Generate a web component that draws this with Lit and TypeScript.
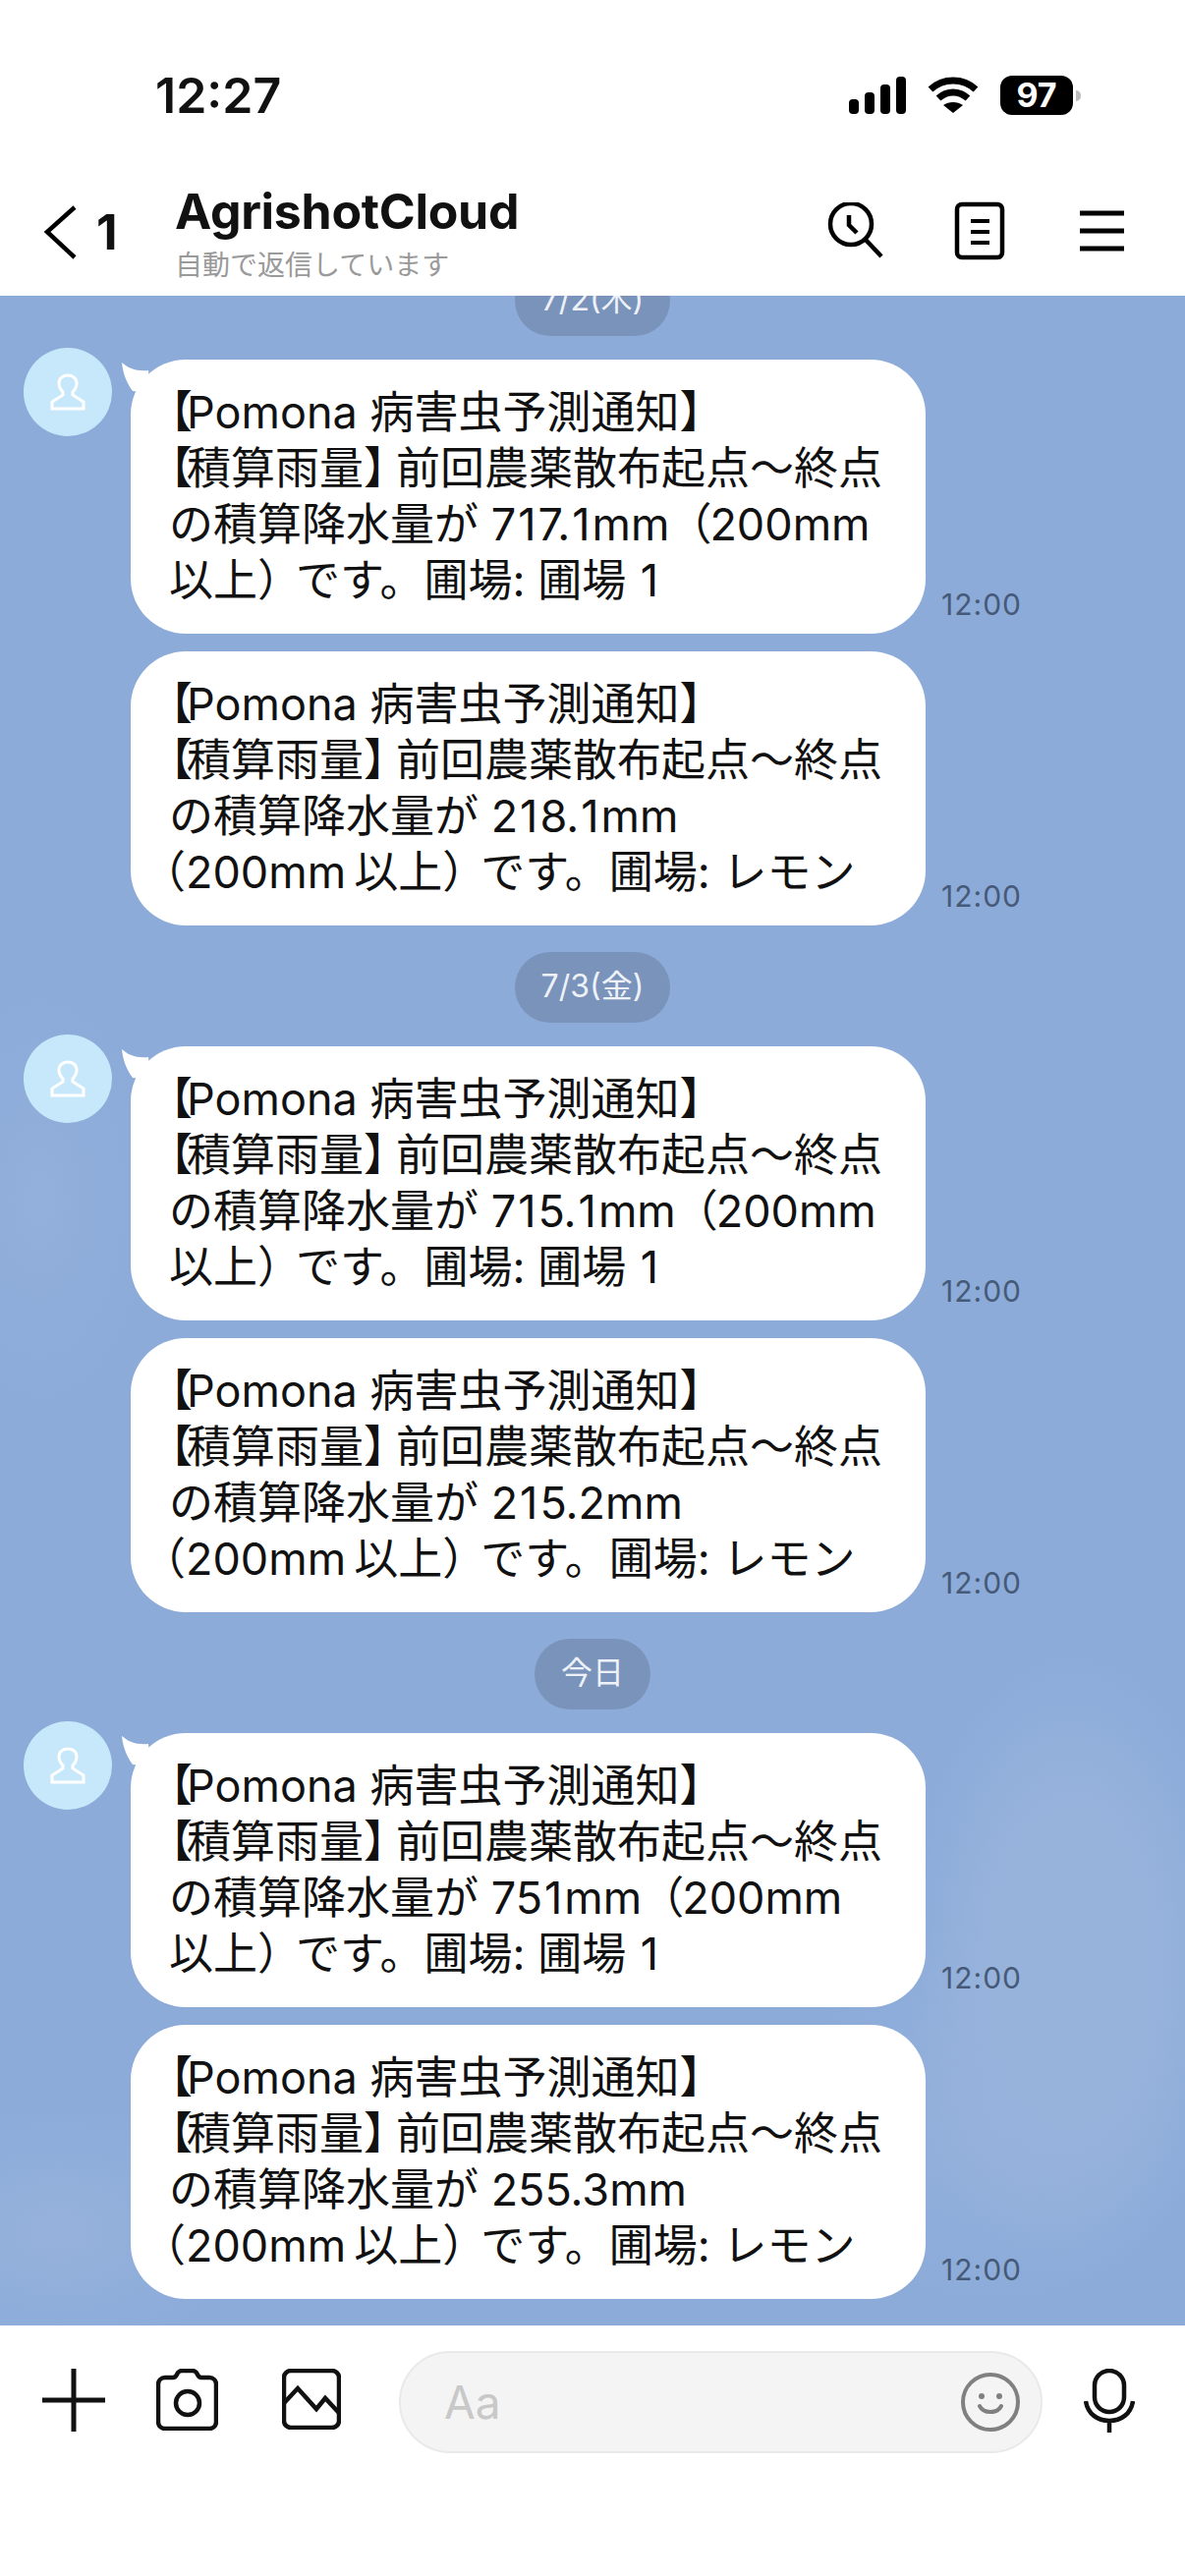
import { html, css, LitElement } from 'lit'
import { customElement } from 'lit/decorators.js'

// one day of notifications; every bubble keeps the line breaks of the app
const days = [
  {
    label: '7/2(木)',
    first: true,
    messages: [
      ['【Pomona 病害虫予測通知】', '【積算雨量】前回農薬散布起点～終点', 'の積算降水量が 717.1mm（200mm', '以上）です。圃場: 圃場 1'],
      ['【Pomona 病害虫予測通知】', '【積算雨量】前回農薬散布起点～終点', 'の積算降水量が 218.1mm', '（200mm\u2009以上）です。圃場: レモン']
    ]
  },
  {
    label: '7/3(金)',
    messages: [
      ['【Pomona 病害虫予測通知】', '【積算雨量】前回農薬散布起点～終点', 'の積算降水量が 715.1mm（200mm', '以上）です。圃場: 圃場 1'],
      ['【Pomona 病害虫予測通知】', '【積算雨量】前回農薬散布起点～終点', 'の積算降水量が 215.2mm', '（200mm\u2009以上）です。圃場: レモン']
    ]
  },
  {
    label: '今日',
    messages: [
      ['【Pomona 病害虫予測通知】', '【積算雨量】前回農薬散布起点～終点', 'の積算降水量が 751mm（200mm', '以上）です。圃場: 圃場 1'],
      ['【Pomona 病害虫予測通知】', '【積算雨量】前回農薬散布起点～終点', 'の積算降水量が 255.3mm', '（200mm\u2009以上）です。圃場: レモン']
    ]
  }
]

// the app trims the empty half of brackets and sets a wider 1 than Inter, so those get their own span
const renderLine = (line: string) =>
  line.split(/([【】（）1])/).map((part, i) => {
    if (part === '【') return html`<span class="open-lens">【</span>`
    if (part === '】') return html`<span class="close-lens">】</span>`
    if (part === '（') return html`<span class=${i === 1 ? 'open-paren' : 'mid-paren'}>（</span>`
    if (part === '）') return html`<span class="close-paren">）</span>`
    if (part === '1') return html`<span class="one">1</span>`
    return part
  })

@customElement('app-root')
export class AppRoot extends LitElement {
  static styles = css`
    :host {
      display: block;
      width: 1206px;
      height: 2622px;
      background: #fff;
      overflow: hidden;
      font-family: Inter, 'Noto Sans CJK JP', sans-serif;
      color: #111;
    }
    svg {
      display: block;
      flex: none;
    }
    .status {
      height: 160px;
      display: flex;
      align-items: flex-start;
      padding: 77px 0 0 158px;
      box-sizing: border-box;
    }
    .clock {
      font-size: 50px;
      line-height: 40px;
      font-weight: 600;
    }
    .status-icons {
      margin-left: auto;
      margin-right: 114px;
      display: flex;
      align-items: center;
      gap: 22px;
    }
    .battery {
      position: relative;
      width: 74px;
      height: 40px;
      border-radius: 12px;
      background: #000;
      color: #fff;
      font-size: 34px;
      line-height: 40px;
      font-weight: 700;
      text-align: center;
    }
    .battery::after {
      content: '';
      position: absolute;
      left: 77px;
      top: 15px;
      width: 5px;
      height: 11px;
      border-radius: 0 6px 6px 0;
      background: #bdbdbd;
    }
    .header {
      height: 141px;
      display: flex;
      align-items: flex-start;
      box-sizing: border-box;
    }
    .back {
      margin: 49px 0 0 44px;
    }
    .unread {
      width: 80px;
      margin-left: 18px;
      padding-top: 51px;
      font-size: 50px;
      line-height: 50px;
      font-weight: 700;
    }
    .title {
      padding-top: 27px;
      font-size: 50px;
      line-height: 56px;
      font-weight: 700;
      letter-spacing: -0.3px;
    }
    .subtitle {
      margin-top: 9px;
      font-size: 28px;
      line-height: 36px;
      color: #9a9a9a;
    }
    .actions {
      margin-left: auto;
      padding: 46px 62px 0 0;
      display: flex;
      align-items: flex-start;
    }
    .chat {
      height: 2066px;
      overflow: hidden;
      background-color: #8cabd9;
      background-image:
        radial-gradient(ellipse 170px 320px at 1090px 1700px, #97b3dc 0%, #97b3dc 50%, transparent 100%),
        radial-gradient(ellipse 200px 200px at 1010px 1850px, #95b1dc 0%, transparent 100%),
        radial-gradient(ellipse 190px 130px at 60px 1970px, #96b2dc 0%, transparent 100%),
        radial-gradient(ellipse 120px 220px at 40px 920px, #93afdb 0%, transparent 100%);
    }
    .chip {
      width: fit-content;
      height: 72px;
      margin: 27px auto 12px;
      padding: 0 27px;
      border-radius: 36px;
      background: #7a93bb;
      color: #eef2f8;
      font-size: 32px;
      line-height: 70px;
    }
    .chip.first {
      margin-top: -31px;
    }
    .row {
      display: flex;
      align-items: flex-end;
      padding-left: 24px;
    }
    .row + .row {
      margin-top: 18px;
    }
    .avatar {
      width: 90px;
      height: 90px;
      align-self: flex-start;
      flex: none;
      border-radius: 50%;
      background: #c7e8fa;
      display: flex;
      align-items: center;
      justify-content: center;
    }
    .avatar-gap {
      width: 90px;
      flex: none;
    }
    .bubble {
      position: relative;
      width: 809px;
      height: 279px;
      margin-left: 19px;
      padding: 25px 0 0 39px;
      box-sizing: border-box;
      border-radius: 56px;
      background: #fff;
      font-size: 45px;
      line-height: 57px;
      white-space: nowrap;
    }
    .row.lead .bubble {
      margin-top: 12px;
    }
    .tail {
      position: absolute;
      left: -10px;
      top: 0;
    }
    .open-lens {
      margin-left: -21px;
      margin-right: -6px;
    }
    .close-lens {
      margin-right: -12px;
    }
    .open-paren {
      margin-left: -28px;
    }
    .mid-paren {
      margin: 0 -2px;
    }
    .close-paren {
      margin-right: -6px;
    }
    .one {
      margin: 0 2px;
    }
    .time {
      margin: 0 0 12px 16px;
      font-size: 30px;
      line-height: 36px;
      color: #465a78;
      letter-spacing: 1px;
    }
    .footer {
      display: flex;
      align-items: flex-start;
      padding: 26px 0 0 0;
    }
    .footer-icon {
      margin-top: 18px;
    }
    .input {
      width: 655px;
      height: 104px;
      margin-left: 59px;
      padding: 0 20px 0 44px;
      box-sizing: border-box;
      display: flex;
      align-items: center;
      justify-content: space-between;
      border: 2px solid #e9e9e9;
      border-radius: 52px;
      background: #f4f4f4;
      color: #c8c8c8;
      font-size: 46px;
    }
  `

  renderStatus() {
    return html`
      <div class="status">
        <div class="clock">12:27</div>
        <div class="status-icons">
          <svg width="58" height="38" viewBox="0 0 58 38" fill="#000">
            <rect x="0" y="23" width="10" height="15" rx="4" />
            <rect x="16" y="16" width="10" height="22" rx="4" />
            <rect x="32" y="8" width="10" height="30" rx="4" />
            <rect x="48" y="0" width="10" height="38" rx="4" />
          </svg>
          <svg width="52" height="38" viewBox="0 0 52 38" fill="none" stroke="#000" stroke-width="7">
            <path d="M3 13 C16 1 36 1 49 13" />
            <path d="M11 22 C20 14 32 14 41 22" />
            <path d="M26 37 L16 29 C22 25 30 25 36 29 Z" fill="#000" stroke="none" />
          </svg>
          <div class="battery">97</div>
        </div>
      </div>
    `
  }

  renderHeader() {
    return html`
      <div class="header">
        <svg class="back" width="36" height="56" viewBox="0 0 36 56" fill="none" stroke="#000" stroke-width="4.5">
          <path d="M32 2 L4 27 L32 53" />
        </svg>
        <div class="unread">1</div>
        <div>
          <div class="title">AgrishotCloud</div>
          <div class="subtitle">自動で返信しています</div>
        </div>
        <div class="actions">
          <svg width="64" height="64" viewBox="0 0 64 64" fill="none" stroke="#000" stroke-width="4.5">
            <circle cx="27" cy="22" r="21" />
            <path d="M25 13 V23 L33 31" />
            <path d="M42 38 L58 55" />
          </svg>
          <svg style="margin-left:68px;margin-top:-1px" width="52" height="60" viewBox="0 0 52 60" fill="none" stroke="#000">
            <rect x="3" y="3" width="46" height="54" rx="5" stroke-width="4.5" />
            <path d="M17 20 H36 M17 31 H36 M17 42 H36" stroke-width="4" />
          </svg>
          <svg style="margin-left:76px;margin-top:6px" width="45" height="46" viewBox="0 0 45 46" fill="none" stroke="#000" stroke-width="5">
            <path d="M0 5 H45 M0 23 H45 M0 41 H45" />
          </svg>
        </div>
      </div>
    `
  }

  renderMessage(lines: string[], lead: boolean) {
    return html`
      <div class="row ${lead ? 'lead' : ''}">
        ${lead
          ? html`<div class="avatar">
              <svg width="36" height="38" viewBox="0 0 36 38" fill="none" stroke="#fff" stroke-width="3">
                <path d="M2 36 V29 L13 22 V19 C10 16 9 13 9 10 C9 5 13 2 18 2 C23 2 27 5 27 10 C27 13 26 16 23 19 V22 L34 29 V36 Z" />
              </svg>
            </div>`
          : html`<div class="avatar-gap"></div>`}
        <div class="bubble">
          ${lead
            ? html`<svg class="tail" width="34" height="34" viewBox="0 0 34 34" fill="#fff">
                <path d="M1 3 C8 9 15 12 28 11 L30 34 L12 32 C6 24 2 14 1 3 Z" />
              </svg>`
            : ''}
          ${lines.map((line) => html`<div>${renderLine(line)}</div>`)}
        </div>
        <div class="time">12:00</div>
      </div>
    `
  }

  renderFooter() {
    return html`
      <div class="footer">
        <svg class="footer-icon" style="margin-left:43px" width="64" height="64" viewBox="0 0 64 64" stroke="#111" stroke-width="5" fill="none">
          <path d="M0 32 H64 M32 0 V64" />
        </svg>
        <svg class="footer-icon" style="margin-left:52px" width="63" height="63" viewBox="0 0 63 63" stroke="#111" stroke-width="4.5" fill="none">
          <path d="M9 9 H17 C19 9 20 8 21 6 L22 4 C23 3 24 2 26 2 H37 C39 2 40 3 41 4 L42 6 C43 8 44 9 46 9 H54 C58 9 61 12 61 16 V54 C61 58 58 61 54 61 H9 C5 61 2 58 2 54 V16 C2 12 5 9 9 9 Z" />
          <circle cx="32" cy="35" r="12" />
        </svg>
        <svg class="footer-icon" style="margin-left:65px" width="60" height="62" viewBox="0 0 60 62" stroke="#111" stroke-width="4.5" fill="none">
          <rect x="2" y="2" width="56" height="58" rx="7" />
          <path d="M2 35 L16 20 L35 41 L44 30 L58 45" />
        </svg>
        <div class="input">
          <span>Aa</span>
          <svg width="62" height="62" viewBox="0 0 62 62" stroke="#808080" stroke-width="4" fill="none">
            <circle cx="31" cy="31" r="28" />
            <circle cx="22" cy="25" r="3" fill="#808080" stroke="none" />
            <circle cx="40" cy="25" r="3" fill="#808080" stroke="none" />
            <path d="M20 35 C24 43 38 43 42 35" stroke-linecap="round" />
          </svg>
        </div>
        <svg class="footer-icon" style="margin-left:42px" width="52" height="66" viewBox="0 0 52 66" stroke="#111" stroke-width="4.5" fill="none">
          <rect x="11" y="2" width="30" height="42" rx="15" />
          <path d="M2 33 C4 46 14 53 26 53 C38 53 48 46 50 33 M26 53 V65" />
        </svg>
      </div>
    `
  }

  render() {
    return html`
      ${this.renderStatus()} ${this.renderHeader()}
      <div class="chat">
        ${days.map(
          (day) => html`
            <div class="chip ${day.first ? 'first' : ''}">${day.label}</div>
            ${day.messages.map((lines, i) => this.renderMessage(lines, i === 0))}
          `
        )}
      </div>
      ${this.renderFooter()}
    `
  }
}
